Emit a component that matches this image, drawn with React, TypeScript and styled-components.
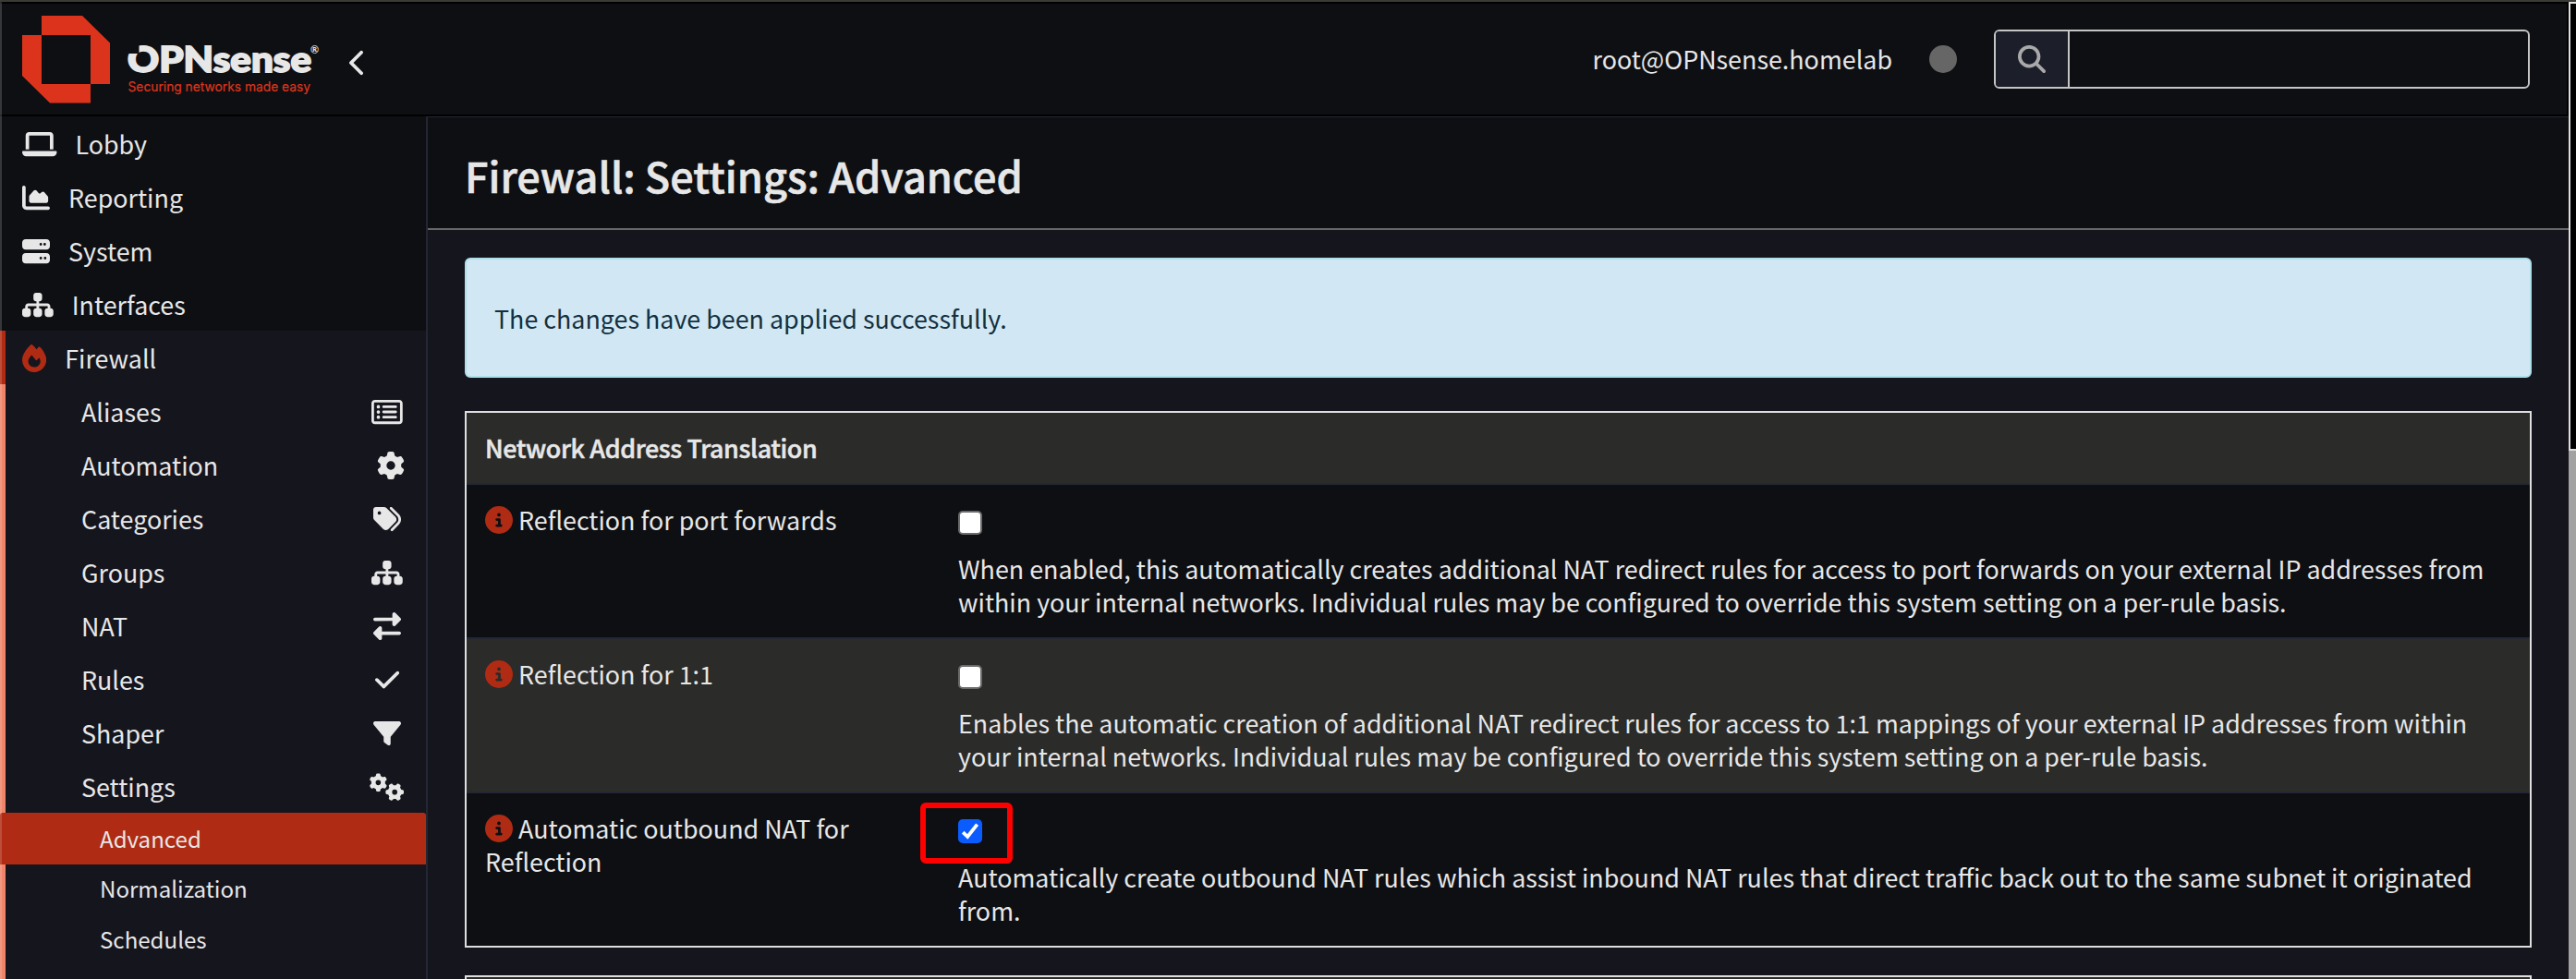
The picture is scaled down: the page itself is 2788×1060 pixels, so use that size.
import React from "react";
import styled, { createGlobalStyle, css } from "styled-components";
import {
  FaLaptop,
  FaChartArea,
  FaServer,
  FaSitemap,
  FaFire,
  FaRegRectangleList,
  FaGear,
  FaTags,
  FaRightLeft,
  FaCheck,
  FaFilter,
  FaGears,
  FaEye,
  FaChevronLeft,
  FaMagnifyingGlass,
  FaCircleInfo,
} from "react-icons/fa6";

const c = {
  ink: "#e7e7e7",
  dark: "#0e0f13",
  panel: "#15151e",
  navy: "#232733",
  red: "#b02b13",
  salmon: "#ee8469",
  stripe: "#2b2b29",
};

const Global = createGlobalStyle`
  * { box-sizing: border-box; }
  body {
    margin: 0;
    background: ${c.panel};
    color: ${c.ink};
    font-family: "Noto Sans CJK SC", "Noto Sans", sans-serif;
    font-size: 26.860px;
    line-height: 36px;
    overflow: hidden;
  }
`;

const Window = styled.div`
  position: relative;
  display: flex;
  width: 2788px;
  height: 1060px;
  overflow: hidden;
  border-top: 2px solid #3a3a37;
  &::before {
    content: "";
    position: absolute;
    z-index: 2;
    left: 0;
    top: 0;
    bottom: 0;
    width: 2px;
    background: rgba(255, 255, 255, 0.17);
  }
`;

const Page = styled.div`
  flex: 1;
  display: flex;
  flex-direction: column;
  min-width: 0;
`;

const Header = styled.header`
  display: flex;
  align-items: center;
  height: 124px;
  flex: none;
  background: ${c.dark};
  border: 2px solid #000;
  border-left: 0;
  padding: 0 40px 0 24px;
`;

const Logo = styled.svg`
  display: block;
  width: 328px;
  height: 96px;
  margin-top: 2px;
`;

/* Glyph box: 30px tall, as wide as the glyph's own advance. */
const Icon = styled.span<{ $w?: number }>`
  display: flex;
  flex: none;
  svg {
    width: ${(p) => p.$w ?? 30}px;
    height: 30px;
  }
`;

const Collapse = styled.button`
  display: flex;
  margin: 7px 0 0 26px;
  padding: 0;
  border: 0;
  background: none;
  color: ${c.ink};
`;

const UserName = styled.span`
  margin-left: auto;
`;

const StatusDot = styled.span`
  width: 30px;
  height: 30px;
  margin: 0 40px;
  border-radius: 50%;
  background: #666;
`;

const SearchBox = styled.div`
  display: flex;
  width: 580px;
  height: 64px;
  border: 2px solid #c4c5c4;
  border-radius: 6px;
  overflow: hidden;
`;

const SearchButton = styled.span`
  display: flex;
  align-items: center;
  justify-content: center;
  width: 80px;
  background: #1c1f2a;
  border-right: 2px solid #c4c5c4;
  color: #a9a9a9;
`;

const SearchInput = styled.input`
  flex: 1;
  border: 0;
  background: transparent;
  outline: 0;
`;

const Body = styled.div`
  display: flex;
  flex: 1;
  min-height: 0;
`;

const Sidebar = styled.nav`
  width: 463px;
  flex: none;
  background: ${c.dark};
  border-right: 2px solid ${c.navy};
  overflow: hidden;
`;

const MenuItem = styled.a<{ $active?: boolean }>`
  display: flex;
  align-items: center;
  gap: 20px;
  height: 58px;
  padding: 2px 0 0 24px;
  color: ${c.ink};
  ${Icon} {
    margin-top: -1px;
  }
  ${(p) =>
    p.$active &&
    css`
      background: ${c.panel};
      border-left: 6px solid ${c.red};
      padding-left: 18px;
      ${Icon} {
        color: ${c.red};
      }
    `}
`;

const SubMenu = styled.div`
  background: linear-gradient(to right, ${c.salmon} 6px, ${c.panel} 6px);
`;

const SubItem = styled.a`
  display: flex;
  align-items: center;
  justify-content: space-between;
  height: 58px;
  padding: 2px 23.5px 0 88px;
`;

const IconSlot = styled.span<{ $end?: boolean }>`
  display: flex;
  justify-content: ${(p) => (p.$end ? "flex-end" : "center")};
  width: 37.5px;
  margin: -1px 0 0 auto;
`;

const LeafItem = styled.a<{ $active?: boolean }>`
  display: block;
  height: ${(p) => (p.$active ? 56 : 54.5)}px;
  padding-left: 108px;
  font-size: 24.100px;
  line-height: ${(p) => (p.$active ? 56 : 52.5)}px;
  ${(p) =>
    p.$active &&
    css`
      background: ${c.red};
      border-radius: 3px 3px 0 0;
    `}
`;

const Main = styled.main`
  flex: 1;
  min-width: 0;
  display: flex;
  flex-direction: column;
`;

const PageHead = styled.div`
  height: 123px;
  flex: none;
  padding: 30px 0 0 40px;
  background: ${c.dark};
  border-top: 1px solid ${c.navy};
  border-bottom: 2px solid #666;
`;

const Title = styled.h1`
  margin: 0;
  font-size: 45px;
  line-height: 66px;
  font-weight: 500;
  -webkit-text-stroke: 0.600px ${c.ink};
`;

const Content = styled.div`
  padding: 30px 40px 0;
`;

const Alert = styled.div`
  height: 130px;
  padding: 0 30px;
  line-height: 128px;
  background: #d1e8f4;
  border: 2px solid #aedfe8;
  border-radius: 6px;
  color: #14303f;
`;

const Table = styled.section`
  margin-top: 36px;
  border: 2px solid #dedede;
  & + & {
    margin-top: 30px;
  }
`;

const TableHead = styled.h2`
  height: 76px;
  margin: 0;
  padding: 0 20px;
  background: ${c.stripe};
  font-size: 26.860px;
  line-height: 76px;
  font-weight: 500;
  letter-spacing: -0.380px;
  -webkit-text-stroke: 0.500px ${c.ink};
`;

const Row = styled.div<{ $striped?: boolean }>`
  display: grid;
  grid-template-columns: 512px 1fr;
  height: 167px;
  border-top: 2px solid ${c.navy};
  background: ${(p) => (p.$striped ? c.stripe : c.dark)};
`;

const LabelCell = styled.div`
  padding: 20px 20px;
  svg {
    width: 30px;
    height: 30px;
    margin-right: 6px;
    color: ${c.red};
    vertical-align: -4px;
  }
`;

const ValueCell = styled.div`
  padding: 28px 20px 0;
`;

const Check = styled.span<{ $on?: boolean }>`
  position: relative;
  display: flex;
  width: 26px;
  height: 26px;
  border: 2px solid ${(p) => (p.$on ? "#0b5cff" : "#6b6b6b")};
  border-radius: 5px;
  background: ${(p) => (p.$on ? "#0b5cff" : "#fff")};
`;

const Highlight = styled.span`
  position: absolute;
  left: -43px;
  top: -20px;
  width: 100px;
  height: 66px;
  border: 6px solid #fe0000;
  border-radius: 6px;
`;

const Help = styled.p`
  margin: 19px 0 0;
`;

const ScrollTrack = styled.div`
  width: 8px;
  flex: none;
  background: #a2a2a2;
`;

const ScrollThumb = styled.div`
  height: 486px;
  border: 2px solid #dedede;
  border-right: 0;
  background: #000;
`;

const menu = [
  { label: "Lobby", icon: <FaLaptop />, w: 37.5 },
  { label: "Reporting", icon: <FaChartArea />, w: 30 },
  { label: "System", icon: <FaServer />, w: 30 },
  { label: "Interfaces", icon: <FaSitemap />, w: 33.75 },
];

const firewall = [
  { label: "Aliases", icon: <FaRegRectangleList />, w: 33.75 },
  { label: "Automation", icon: <FaGear />, w: 30, end: true },
  { label: "Categories", icon: <FaTags />, w: 30 },
  { label: "Groups", icon: <FaSitemap />, w: 33.75 },
  { label: "NAT", icon: <FaRightLeft />, w: 30 },
  { label: "Rules", icon: <FaCheck />, w: 26.25 },
  { label: "Shaper", icon: <FaFilter />, w: 30 },
  { label: "Settings", icon: <FaGears />, w: 37.5 },
];

const options = [
  {
    label: "Reflection for port forwards",
    help: "When enabled, this automatically creates additional NAT redirect rules for access to port forwards on your external IP addresses from within your internal networks. Individual rules may be configured to override this system setting on a per-rule basis.",
  },
  {
    label: "Reflection for 1:1",
    help: "Enables the automatic creation of additional NAT redirect rules for access to 1:1 mappings of your external IP addresses from within your internal networks. Individual rules may be configured to override this system setting on a per-rule basis.",
  },
  {
    label: "Automatic outbound NAT for Reflection",
    help: "Automatically create outbound NAT rules which assist inbound NAT rules that direct traffic back out to the same subnet it originated from.",
    checked: true,
  },
];

function Brand() {
  return (
    <Logo viewBox="24 17 328 96">
      <path d="M45 17H89L119 46.500V91H98V38H45Z" fill="#dc341c" />
      <path d="M24 38H45V91H98V111.500H54L24 82Z" fill="#dc341c" />
      <text x="138" y="78.300" fontFamily="Lato" fontWeight="900" fontSize="38" textLength="199" lengthAdjust="spacingAndGlyphs" fill={c.ink} stroke={c.ink} strokeWidth="1.800">
        OPNsense
      </text>
      <rect x="136" y="48" width="14.500" height="10" fill={c.dark} />
      <text x="138.500" y="98.500" fontFamily="Inter" fontWeight="400" fontSize="14.300" textLength="197.500" lengthAdjust="spacingAndGlyphs" fill="#dc341c" stroke="#dc341c" strokeWidth="0.200">
        Securing networks made easy
      </text>
      <text x="336" y="57.500" fontFamily="Lato" fontWeight="700" fontSize="11" fill={c.ink}>
        ®
      </text>
    </Logo>
  );
}

function CheckBox({ checked }: { checked?: boolean }) {
  return (
    <Check $on={checked} role="checkbox" aria-checked={!!checked}>
      {checked && (
        <>
          <svg width="22" height="22" viewBox="0 0 22 22" fill="none" stroke="#fff" strokeWidth="3.800">
            <path d="M3.200 12.200L8.200 17L18.600 3.600" />
          </svg>
          <Highlight />
        </>
      )}
    </Check>
  );
}

export default function App() {
  return (
    <Window>
      <Global />
      <Page>
        <Header>
          <Brand />
          <Collapse aria-label="Collapse">
            <Icon $w={18.75}>
              <FaChevronLeft />
            </Icon>
          </Collapse>
          <UserName>root@OPNsense.homelab</UserName>
          <StatusDot />
          <SearchBox>
            <SearchButton>
              <Icon>
                <FaMagnifyingGlass />
              </Icon>
            </SearchButton>
            <SearchInput />
          </SearchBox>
        </Header>
        <Body>
          <Sidebar>
            {menu.map((m) => (
              <MenuItem key={m.label}>
                <Icon $w={m.w}>{m.icon}</Icon>
                {m.label}
              </MenuItem>
            ))}
            <MenuItem $active>
              <Icon $w={26.25}>
                <FaFire />
              </Icon>
              Firewall
            </MenuItem>
            <SubMenu>
              {firewall.map((m) => (
                <SubItem key={m.label}>
                  {m.label}
                  <IconSlot $end={m.end}>
                    <Icon $w={m.w}>{m.icon}</Icon>
                  </IconSlot>
                </SubItem>
              ))}
              <LeafItem $active>Advanced</LeafItem>
              <LeafItem>Normalization</LeafItem>
              <LeafItem>Schedules</LeafItem>
              <SubItem>
                <IconSlot>
                  <Icon $w={33.75}>
                    <FaEye />
                  </Icon>
                </IconSlot>
              </SubItem>
            </SubMenu>
          </Sidebar>
          <Main>
            <PageHead>
              <Title>Firewall: Settings: Advanced</Title>
            </PageHead>
            <Content>
              <Alert>The changes have been applied successfully.</Alert>
              <Table>
                <TableHead>Network Address Translation</TableHead>
                {options.map((o, i) => (
                  <Row key={o.label} $striped={i % 2 === 1}>
                    <LabelCell>
                      <FaCircleInfo />
                      {o.label}
                    </LabelCell>
                    <ValueCell>
                      <CheckBox checked={o.checked} />
                      <Help>{o.help}</Help>
                    </ValueCell>
                  </Row>
                ))}
              </Table>
              <Table>
                <TableHead />
              </Table>
            </Content>
          </Main>
        </Body>
      </Page>
      <ScrollTrack>
        <ScrollThumb />
      </ScrollTrack>
    </Window>
  );
}
